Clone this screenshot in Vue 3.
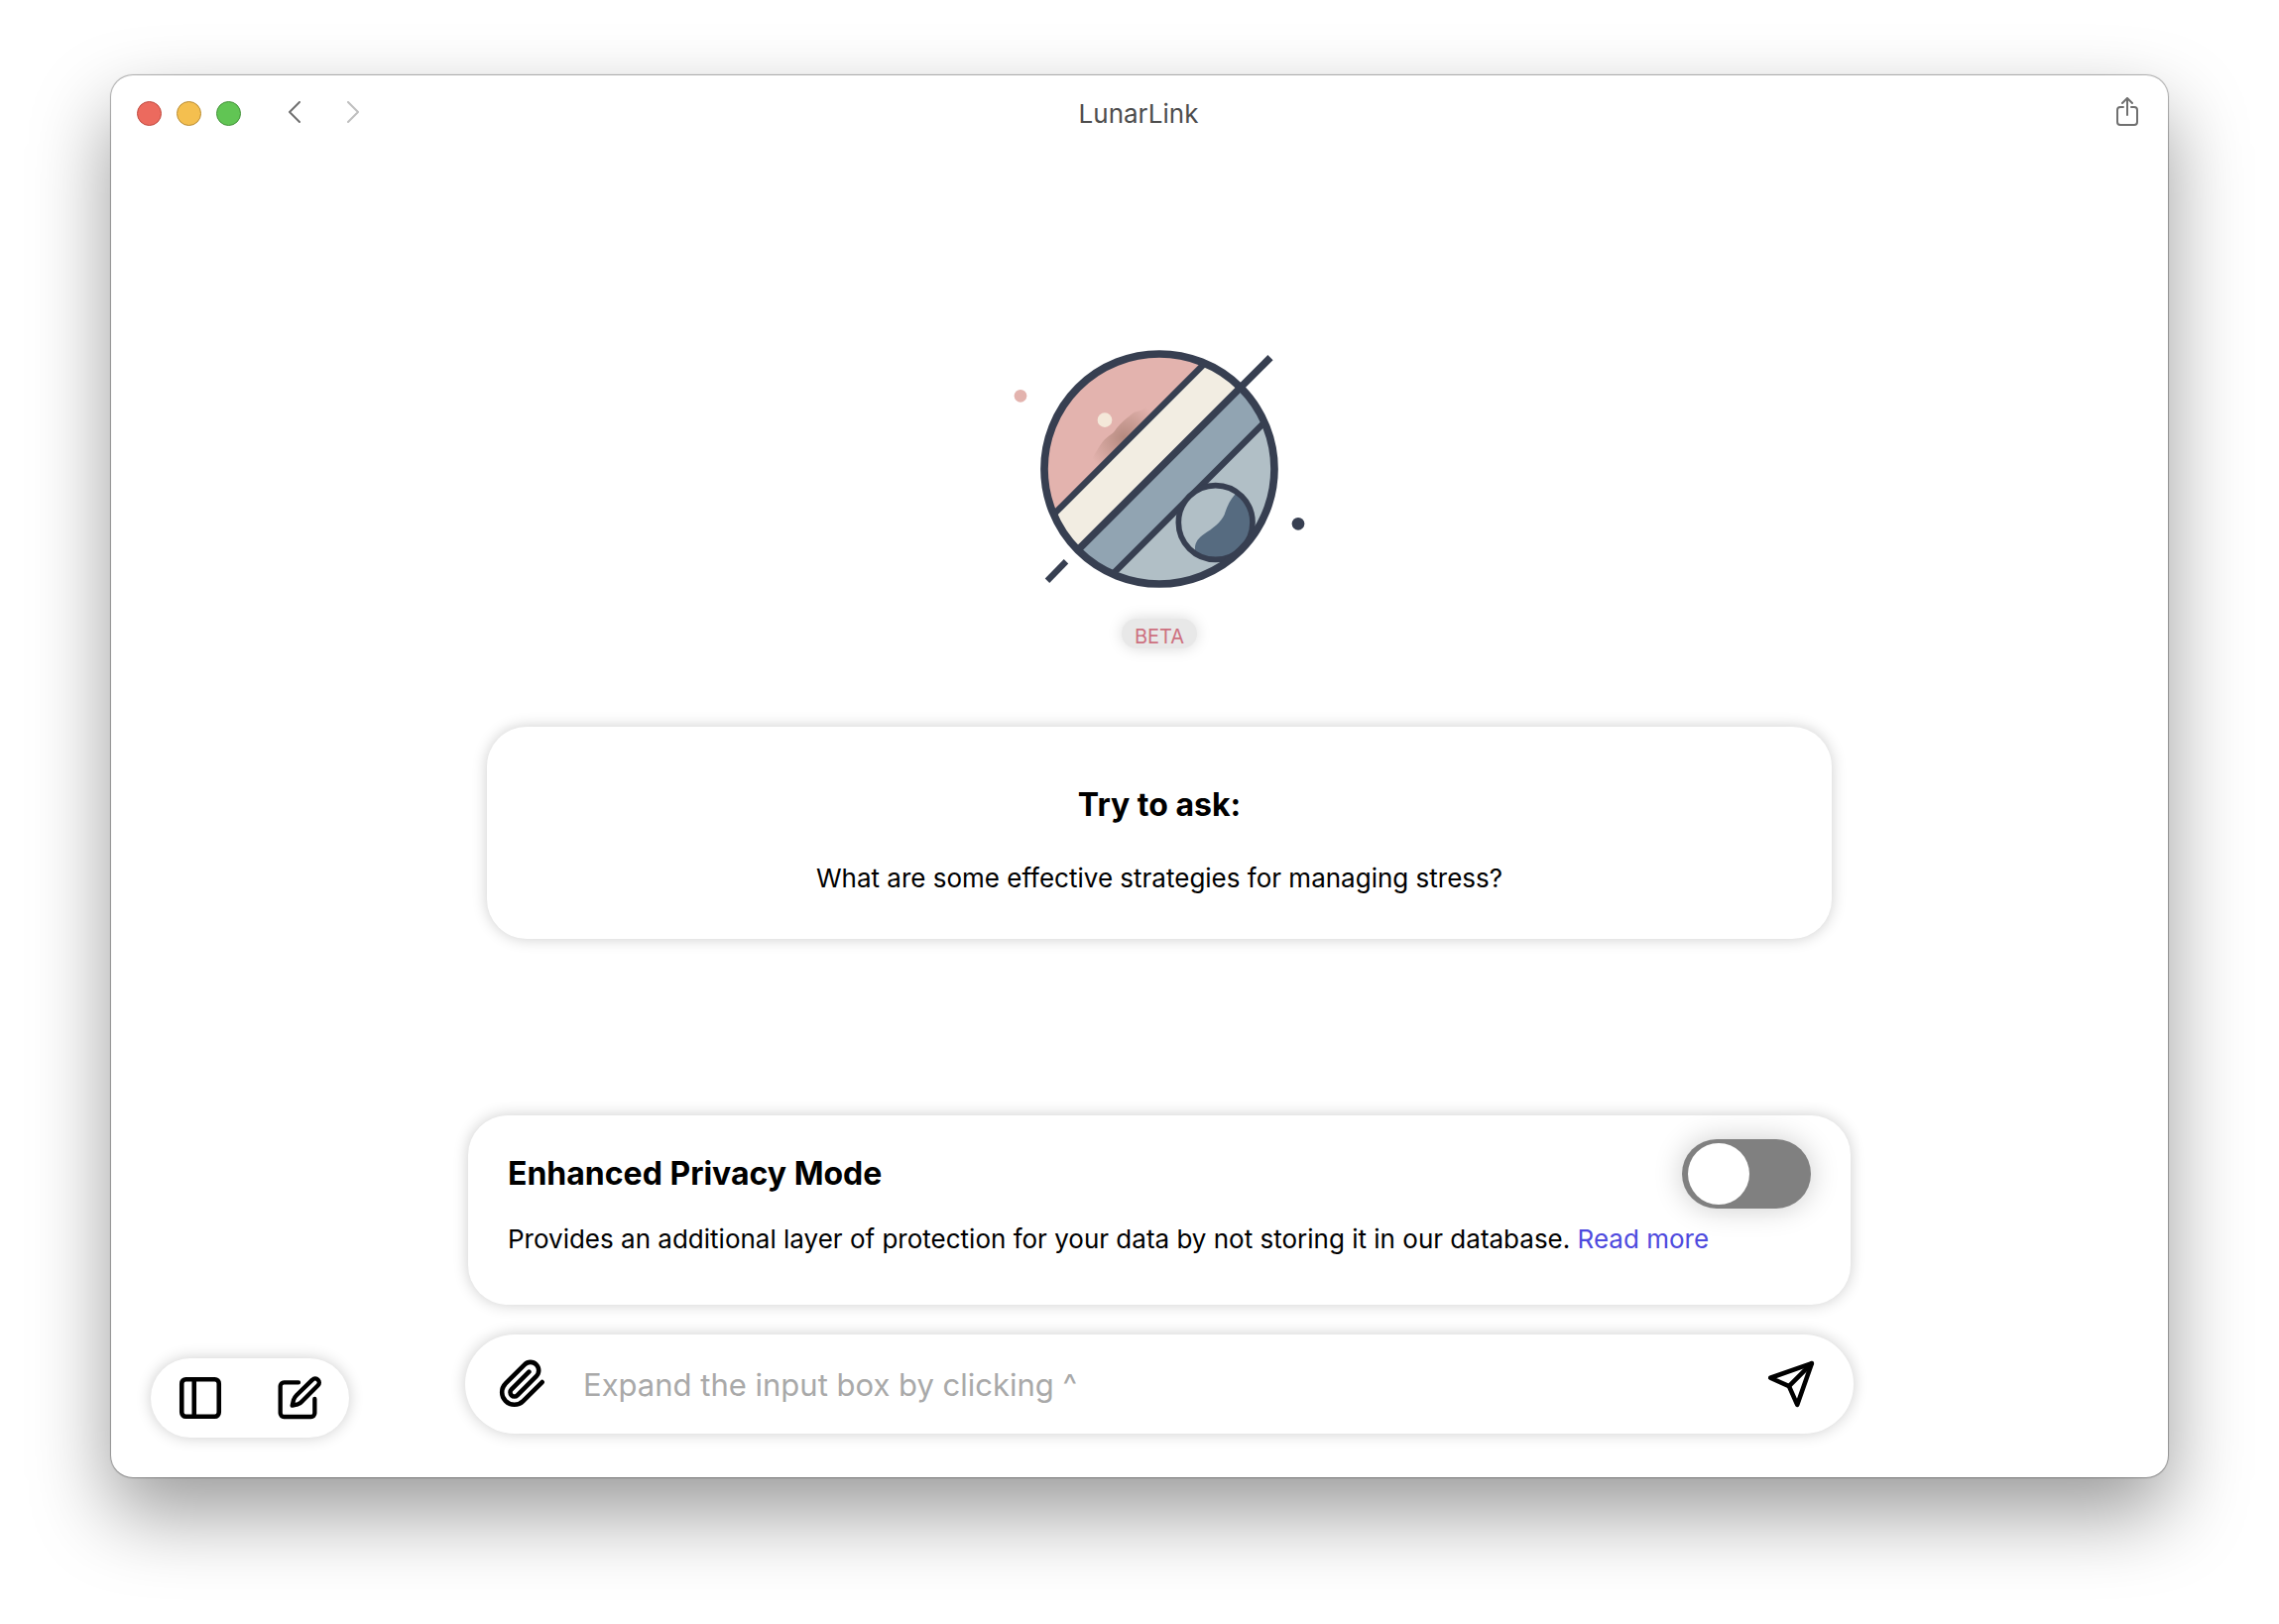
<template>
  <div class="desktop">
    <div class="window">
      <!-- Title bar -->
      <header class="titlebar">
        <div class="titlebar-left">
          <div class="traffic-lights">
            <button class="light close" aria-label="Close"></button>
            <button class="light minimize" aria-label="Minimize"></button>
            <button class="light maximize" aria-label="Maximize"></button>
          </div>
          <div class="history">
            <button class="icon-btn back" aria-label="Back">
              <svg width="14" height="24" viewBox="0 0 14 24">
                <path d="M12 1L2 11l10 10" />
              </svg>
            </button>
            <button class="icon-btn forward" aria-label="Forward">
              <svg width="14" height="24" viewBox="0 0 14 24">
                <path d="M2 1l10 10L2 21" />
              </svg>
            </button>
          </div>
        </div>
        <h1 class="app-title">LunarLink</h1>
        <button class="icon-btn share" aria-label="Share">
          <svg width="26" height="32" viewBox="0 0 26 32">
            <path d="M9 10H6a3 3 0 0 0-3 3v12a3 3 0 0 0 3 3h14a3 3 0 0 0 3-3V13a3 3 0 0 0-3-3h-3" />
            <path d="M13 18V2M8 6l5-5 5 5" />
          </svg>
        </button>
      </header>

      <div class="content">
        <!-- Sidebar / new chat -->
        <nav class="tools" aria-label="Chat tools">
          <button class="icon-btn" aria-label="Toggle sidebar">
            <svg width="50" height="50" viewBox="0 0 24 24" class="stroke-icon">
              <rect x="3" y="3" width="18" height="18" rx="2" />
              <path d="M9 3v18" />
            </svg>
          </button>
          <button class="icon-btn" aria-label="New chat">
            <svg width="50" height="50" viewBox="0 0 150 150" class="stroke-icon edit-icon">
              <path d="M72 28H28a11 11 0 0 0-11 11v82a11 11 0 0 0 11 11h82a11 11 0 0 0 11-11V78" />
              <path d="M114 20a12 12 0 0 1 17 17L84 84Q78 91 70 94L53 98L57 81Q60 73 66 67Z" />
            </svg>
          </button>
        </nav>

        <main class="chat">
          <section class="hero">
            <svg class="planet" width="300" height="246" viewBox="57 60 900 738">
              <defs>
                <clipPath id="planet-disc">
                  <circle cx="507" cy="429" r="350" />
                </clipPath>
                <clipPath id="moon-disc">
                  <circle cx="677" cy="591" r="112" />
                </clipPath>
                <radialGradient id="crater" gradientUnits="userSpaceOnUse" cx="400" cy="335" r="115">
                  <stop offset="0" stop-color="#b58a7f" />
                  <stop offset="1" stop-color="#e3b3ae" />
                </radialGradient>
              </defs>
              <g clip-path="url(#planet-disc)">
                <rect x="150" y="70" width="720" height="720" fill="#e3b3ae" />
                <path d="M298 425Q298 405 307 392C318 375 330 350 345 337C358 326 368 322 377 307C392 287 410 274 427 260C440 252 450 256 463 247C475 238 485 230 500 232L510 250L320 440Z" fill="url(#crater)" />
                <path d="M647 107L187 567V800H870V107Z" fill="#f2ede2" />
                <path d="M757 182L257 682V800H870V182Z" fill="#91a4b2" />
                <path d="M826 287L366 747V800H870V287Z" fill="#b1bfc6" />
                <g stroke="#373f51" stroke-width="19">
                  <path d="M660 94L174 580" />
                  <path d="M840 273L354 759" />
                </g>
              </g>
              <circle cx="342" cy="281" r="22" fill="#f4e8d9" />
              <circle cx="677" cy="591" r="112" fill="#b1bfc6" />
              <path clip-path="url(#moon-disc)" d="M745 496C716 526 709 552 704 567C694 590 668 610 642 626C622 640 611 656 616 680L680 720H800V496Z" fill="#566b80" />
              <g fill="none" stroke="#373f51">
                <circle cx="677" cy="591" r="112" stroke-width="17" />
                <circle cx="507" cy="429" r="348" stroke-width="23" />
                <path d="M843 92L267 668" stroke-width="22" />
                <path d="M225 709L168 767" stroke-width="19" />
              </g>
              <circle cx="87" cy="208" r="19" fill="#e3b3ae" />
              <circle cx="927" cy="595" r="19" fill="#373f51" />
            </svg>
            <span class="beta">BETA</span>
          </section>

          <section class="card suggestion">
            <h2>Try to ask:</h2>
            <p>{{ suggestion }}</p>
          </section>

          <div class="bottom">
            <section class="card privacy">
              <div class="privacy-head">
                <h2><label for="privacy-toggle">Enhanced Privacy Mode</label></h2>
                <input id="privacy-toggle" v-model="privacyMode" type="checkbox" role="switch" class="toggle" />
              </div>
              <p>
                Provides an additional layer of protection for your data by not storing it in our database.
                <a href="#privacy">Read more</a>
              </p>
            </section>

            <form class="card composer" @submit.prevent="sendMessage">
              <button type="button" class="icon-btn" aria-label="Attach file">
                <svg width="50" height="50" viewBox="0 0 24 24" class="stroke-icon">
                  <path d="M21.44 11.05l-9.19 9.19a6 6 0 0 1-8.49-8.49l9.19-9.19a4 4 0 0 1 5.66 5.66l-9.2 9.19a2 2 0 0 1-2.83-2.83l8.49-8.48" />
                </svg>
              </button>
              <input
                v-model="message"
                type="text"
                class="message-input"
                aria-label="Message"
                placeholder="Expand the input box by clicking ^"
              />
              <button type="submit" class="icon-btn" aria-label="Send">
                <svg width="50" height="50" viewBox="0 0 24 24" class="stroke-icon">
                  <path d="M22 2L11 13" />
                  <path d="M22 2l-7 20-4-9-9-4 20-7z" />
                </svg>
              </button>
            </form>
          </div>
        </main>
      </div>
    </div>
  </div>
</template>

<script setup>
import { ref } from 'vue'

const message = ref('')
const privacyMode = ref(false)
const suggestion = ref('What are some effective strategies for managing stress?')

const sendMessage = () => {
  if (message.value.trim()) {
    message.value = ''
  }
}
</script>

<style>
body {
  margin: 0;
  background: #ffffff;
}
</style>

<style scoped>
* {
  box-sizing: border-box;
}

.desktop {
  display: flex;
  min-height: 100vh;
  padding: 76px 112px 148px;
  font-family: Inter, 'Liberation Sans', sans-serif;
  color: #000000;
  overflow: hidden;
}

.window {
  flex: 1;
  display: flex;
  flex-direction: column;
  min-width: 0;
  background: #ffffff;
  border-radius: 22px;
  box-shadow:
    0 0 1px 1px rgba(0, 0, 0, 0.3),
    0 36px 80px rgba(0, 0, 0, 0.4);
}

.titlebar {
  display: grid;
  grid-template-columns: 1fr auto 1fr;
  align-items: center;
  height: 76px;
  padding: 0 28px 0 26px;
}

.titlebar-left {
  display: flex;
  align-items: center;
  gap: 47px;
}

.traffic-lights {
  display: flex;
  gap: 15px;
}

.light {
  width: 25px;
  height: 25px;
  padding: 0;
  border: 1px solid;
  border-radius: 50%;
}

.close {
  background: #ec6a5e;
  border-color: #c04b41;
}

.minimize {
  background: #f4bf4f;
  border-color: #b98d35;
}

.maximize {
  background: #61c554;
  border-color: #44923a;
}

.history {
  display: flex;
  gap: 45px;
}

.history svg,
.share svg {
  fill: none;
  stroke: #707070;
  stroke-width: 2;
  stroke-linecap: round;
  stroke-linejoin: round;
}

.history .forward svg {
  stroke: #bfbfbf;
}

.app-title {
  margin: 0;
  padding-top: 2px;
  font-size: 26px;
  line-height: 32px;
  font-weight: 400;
  color: #4d4d4d;
}

.share {
  justify-self: end;
}

.icon-btn {
  display: flex;
  padding: 0;
  border: none;
  background: none;
  cursor: pointer;
}

.stroke-icon {
  fill: none;
  stroke: #000000;
  stroke-width: 2.2;
  stroke-linecap: round;
  stroke-linejoin: round;
}

.edit-icon {
  stroke-width: 13;
}

/* The right gutter is narrower than the tools column */
.content {
  flex: 1;
  display: grid;
  grid-template-columns: 200px minmax(0, 1fr) 160px;
  padding: 0 40px 40px;
}

.tools {
  align-self: end;
  display: flex;
  justify-content: space-between;
  padding: 15px 25px;
  border-radius: 40px;
  background: #ffffff;
  box-shadow: 0 0 15px rgba(0, 0, 0, 0.2);
}

.chat {
  display: flex;
  flex-direction: column;
  width: 100%;
  max-width: 1400px;
  margin: 0 auto;
  padding: 198px 0 4px;
}

.hero {
  display: flex;
  flex-direction: column;
  align-items: center;
  gap: 28px;
}

.beta {
  padding: 6px 13px 0;
  border-radius: 15px;
  background: #e8e8e8;
  box-shadow: 0 0 15px rgba(0, 0, 0, 0.15);
  font-size: 20px;
  line-height: 24px;
  color: #cd7180;
}

.card {
  background: #ffffff;
  border-radius: 40px;
  box-shadow: 0 0 15px rgba(0, 0, 0, 0.2);
}

.card h2 {
  margin: 0;
  font-size: 32px;
  line-height: 40px;
  font-weight: 700;
}

.card p {
  margin: 0;
  font-size: 26px;
  line-height: 34px;
}

.suggestion {
  margin: 79px 22px 0;
  padding: 59px 40px 44px;
  text-align: center;
}

.suggestion p {
  margin-top: 37px;
}

.bottom {
  display: flex;
  flex-direction: column;
  gap: 30px;
  margin-top: auto;
  padding-top: 40px;
}

.privacy {
  margin: 0 3px;
  padding: 24px 40px 49px;
}

.privacy-head {
  display: flex;
  align-items: center;
  justify-content: space-between;
  margin-bottom: 14px;
}

.privacy a {
  color: #4e4ade;
  text-decoration: none;
}

.toggle {
  appearance: none;
  width: 130px;
  height: 70px;
  margin: 0;
  padding: 4px 6px;
  border-radius: 35px;
  background: #808080;
  box-shadow: 0 0 30px rgba(0, 0, 0, 0.2);
  cursor: pointer;
}

.toggle::before {
  content: '';
  display: block;
  width: 62px;
  height: 62px;
  border-radius: 50%;
  background: #ffffff;
  transition: margin 0.2s ease;
}

.toggle:checked {
  background: #4e4ade;
}

.toggle:checked::before {
  margin-left: 56px;
}

.composer {
  display: flex;
  align-items: center;
  gap: 36px;
  height: 100px;
  padding: 0 38px 0 33px;
  border-radius: 50px;
}

.message-input {
  flex: 1;
  min-width: 0;
  padding: 2px 0 0;
  border: none;
  outline: none;
  background: none;
  font-family: inherit;
  font-size: 31px;
  line-height: 40px;
  color: #000000;
}

.message-input::placeholder {
  color: #a9a9a9;
}
</style>
